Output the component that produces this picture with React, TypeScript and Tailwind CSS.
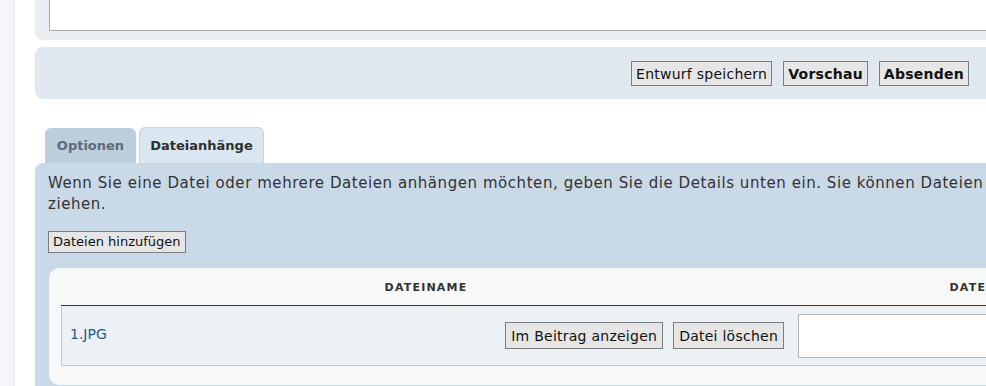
import React from 'react';

const font = { fontFamily: '"DejaVu Sans", Verdana, sans-serif' };

// grey form button as the forum renders it
const Btn = ({ children, bold, tall }: { children: React.ReactNode; bold?: boolean; tall?: boolean }) => (
    <button
        className={
            'border border-[#7d7d7d] bg-[#e6e6e6] text-[14px] leading-none tracking-[0.25px] text-[#111] ' +
            (bold ? 'font-bold ' : '') +
            (tall ? 'h-[27px] px-[5px]' : 'h-[25px] px-[4px]')
        }
    >
        {children}
    </button>
);

const App = () => {
    return (
        <div className="w-[986px] h-[386px] overflow-hidden bg-white flex" style={font}>
            {/* left page edge */}
            <div className="w-[13px] shrink-0 bg-[#f4f6f9]" />
            <div className="w-[2px] shrink-0 bg-[#e9edf2]" />
            <div className="w-[20px] shrink-0 bg-white" />

            <div className="w-[1010px] shrink-0 flex flex-col">
                {/* editor panel (cut off at the top) */}
                <div className="h-[40px] bg-[#ebeff2] rounded-bl-[8px] pl-[14px]">
                    <div className="h-[31px] bg-white border-l border-b border-[#a8a8a8]" />
                </div>

                {/* submit bar */}
                <div className="mt-[7px] h-[52px] bg-[#e0e9f0] rounded-l-[8px] flex justify-end items-start pt-[14px] pr-[76px] gap-[11px]">
                    <Btn>Entwurf speichern</Btn>
                    <Btn bold>Vorschau</Btn>
                    <Btn bold>Absenden</Btn>
                </div>

                {/* tabs */}
                <div className="mt-[28px] flex items-end gap-[3px] pl-[10px]">
                    <div className="w-[91px] h-[35px] rounded-t-[6px] bg-[#bccddb] flex items-center justify-center text-[13px] font-bold text-[#5a6b7c]">
                        Optionen
                    </div>
                    <div className="w-[125px] h-[36px] rounded-t-[6px] bg-[#dae6f1] border border-b-0 border-[#c4d6e6] flex items-center justify-center text-[13px] font-bold text-[#2f2f2f]">
                        Dateianhänge
                    </div>
                </div>

                {/* attachments panel */}
                <div className="bg-[#c9d9e8] rounded-tl-[8px] pl-[13px] pt-[10px] flex-1">
                    <p className="w-[960px] text-[15px] leading-[21px] tracking-[0.56px] text-[#333]">
                        Wenn Sie eine Datei oder mehrere Dateien anhängen möchten, geben Sie die Details unten ein. Sie können Dateien ziehen.
                    </p>
                    <div className="mt-[14px]">
                        <button className="h-[22px] px-[4px] border border-[#7d7d7d] bg-[#e6e6e6] text-[13px] leading-none text-[#111]">
                            Dateien hinzufügen
                        </button>
                    </div>

                    <div className="mt-[15px] ml-[1px] bg-[#f7f8f8] rounded-tl-[10px] rounded-bl-[10px] pl-[12px] pb-[19px]">
                        <div className="flex h-[38px] items-end border-b border-[#333]">
                            <div className="w-[730px] shrink-0 pb-[9px] text-center text-[11px] font-bold text-[#333] tracking-[1.2px]">DATEINAME</div>
                            <div className="w-[470px] shrink-0 pb-[9px] text-center text-[11px] font-bold text-[#333] tracking-[1.2px]">DATEIBESCHREIBUNG</div>
                        </div>
                        <div className="flex h-[60px] bg-[#ebf1f5] border-l border-b border-[#c3c7cb]">
                            <div className="w-[729px] shrink-0 flex items-center pl-[8px] pr-[7px]">
                                <a className="text-[14px] text-[#1e5a8c] mb-[2px]">1.JPG</a>
                                <div className="ml-auto flex gap-[10px]">
                                    <Btn tall>Im Beitrag anzeigen</Btn>
                                    <Btn tall>Datei löschen</Btn>
                                </div>
                            </div>
                            <div className="w-[470px] shrink-0 flex items-center pl-[7px]">
                                <div className="w-full h-[44px] bg-white border border-[#b5b5b5]" />
                            </div>
                        </div>
                    </div>
                </div>
            </div>
        </div>
    );
};

export default App;
